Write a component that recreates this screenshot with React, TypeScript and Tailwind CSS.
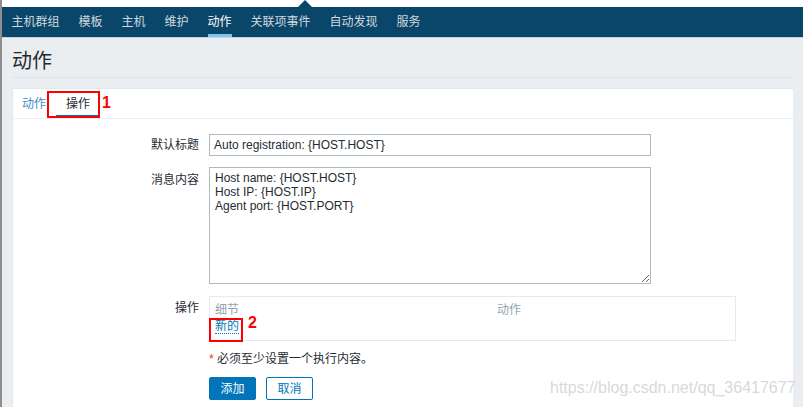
import React from "react";

const navItems = ["主机群组", "模板", "主机", "维护", "动作", "关联项事件", "自动发现", "服务"];

export default function App() {
  return (
    <div className="relative flex h-[407px] w-[803px] overflow-hidden bg-[#ebeef0] font-['Liberation_Sans','Noto_Sans_CJK_SC',sans-serif] text-[12px] text-[#1f2c33]">
      <div className="w-[2px] shrink-0 bg-[#8e8e8e]" />
      <div className="flex min-w-0 flex-1 flex-col">
        <div className="relative h-[7px] shrink-0 bg-white">
          <div className="absolute left-[296px] top-0 h-0 w-0 border-x-[7px] border-b-[7px] border-x-transparent border-b-[#0a466a]" />
        </div>
        <nav className="flex h-[30px] shrink-0 items-stretch bg-[#0a466a]">
          {navItems.map((t) => (
            <div key={t} className="flex items-center px-[9.5px]">
              <span
                className={
                  t === "动作"
                    ? "flex h-full items-center text-white shadow-[inset_0_-3px_0_#7cc4f2]"
                    : "flex h-full items-center text-[#cfd8de]"
                }
              >
                {t}
              </span>
            </div>
          ))}
        </nav>
        <div className="h-[1px] shrink-0 bg-[#c7d1d8]" />
        <div className="flex flex-1 flex-col px-[10px]">
          <div className="h-[40px] shrink-0 border-b border-[#dde3e6] pt-[11px] text-[20px] leading-[24px] text-[#1f2c33]">
            动作
          </div>
          <div className="mt-[10px] flex-1 border-l border-t border-[#e2e7ea] bg-white">
            <div className="flex h-[30px] border-b border-[#ebeef0]">
              <div className="flex items-center pl-[9px] pr-[10px] text-[#3d8cc9]">动作</div>
              <div className="flex items-center px-[10px] text-[#1f2c33] shadow-[inset_0_-3px_0_#0275b8]">操作</div>
            </div>
            <div className="flex flex-col pt-[15px]">
              <div className="flex items-center">
                <div className="w-[186px] text-right">默认标题</div>
                <div className="ml-[10px] flex h-[22px] w-[442px] items-center border border-[#acbbc2] pl-[4px] text-[#1f2c33]">
                  Auto registration: {"{HOST.HOST}"}
                </div>
              </div>
              <div className="mt-[11px] flex items-start">
                <div className="w-[186px] pt-[6px] text-right leading-[14px]">消息内容</div>
                <textarea
                  readOnly
                  className="ml-[10px] h-[117px] w-[442px] border border-[#acbbc2] px-[5px] pt-[3px] font-['Liberation_Sans',sans-serif] text-[12px] leading-[14px] text-[#1f2c33] outline-none"
                  defaultValue={"Host name: {HOST.HOST}\nHost IP: {HOST.IP}\nAgent port: {HOST.PORT}"}
                />
              </div>
              <div className="mt-[12px] flex items-start">
                <div className="w-[186px] pt-[5px] text-right leading-[14px]">操作</div>
                <div className="ml-[10px] h-[45px] w-[527px] border border-[#e6eaec] px-[5px] pt-[6px] leading-[14px]">
                  <div className="flex text-[#93a3ad]">
                    <div className="w-[282px]">细节</div>
                    <div>动作</div>
                  </div>
                  <div className="mt-[2px]">
                    <span className="border-b border-dotted border-[#0275b8] text-[#0275b8]">新的</span>
                  </div>
                </div>
              </div>
              <div className="mt-[11px] flex">
                <div className="ml-[196px] leading-[14px]">
                  <span className="text-[#e33734]">*</span> 必须至少设置一个执行内容。
                </div>
              </div>
              <div className="ml-[196px] mt-[11px] flex gap-[10px]">
                <button className="h-[23px] w-[47px] rounded-[2px] border border-[#0275b8] bg-[#0275b8] text-white">添加</button>
                <button className="h-[23px] w-[47px] rounded-[2px] border border-[#0275b8] bg-white text-[#0275b8]">取消</button>
              </div>
            </div>
          </div>
        </div>
      </div>

      <div className="absolute left-[47px] top-[91px] h-[27px] w-[53px] border-2 border-[#ff0000]" />
      <div className="absolute left-[102px] top-[94px] text-[16px] font-bold leading-[18px] text-[#ff0000]">1</div>
      <div className="absolute left-[209px] top-[318px] h-[24px] w-[34px] border-2 border-[#ff0000]" />
      <div className="absolute left-[248px] top-[314px] text-[16px] font-bold leading-[18px] text-[#ff0000]">2</div>
      <div className="absolute left-[550px] top-[378px] font-['Liberation_Sans',sans-serif] text-[16px] leading-[20px] text-[#d9d9d9]">
        https://blog.csdn.net/qq_36417677
      </div>
    </div>
  );
}
